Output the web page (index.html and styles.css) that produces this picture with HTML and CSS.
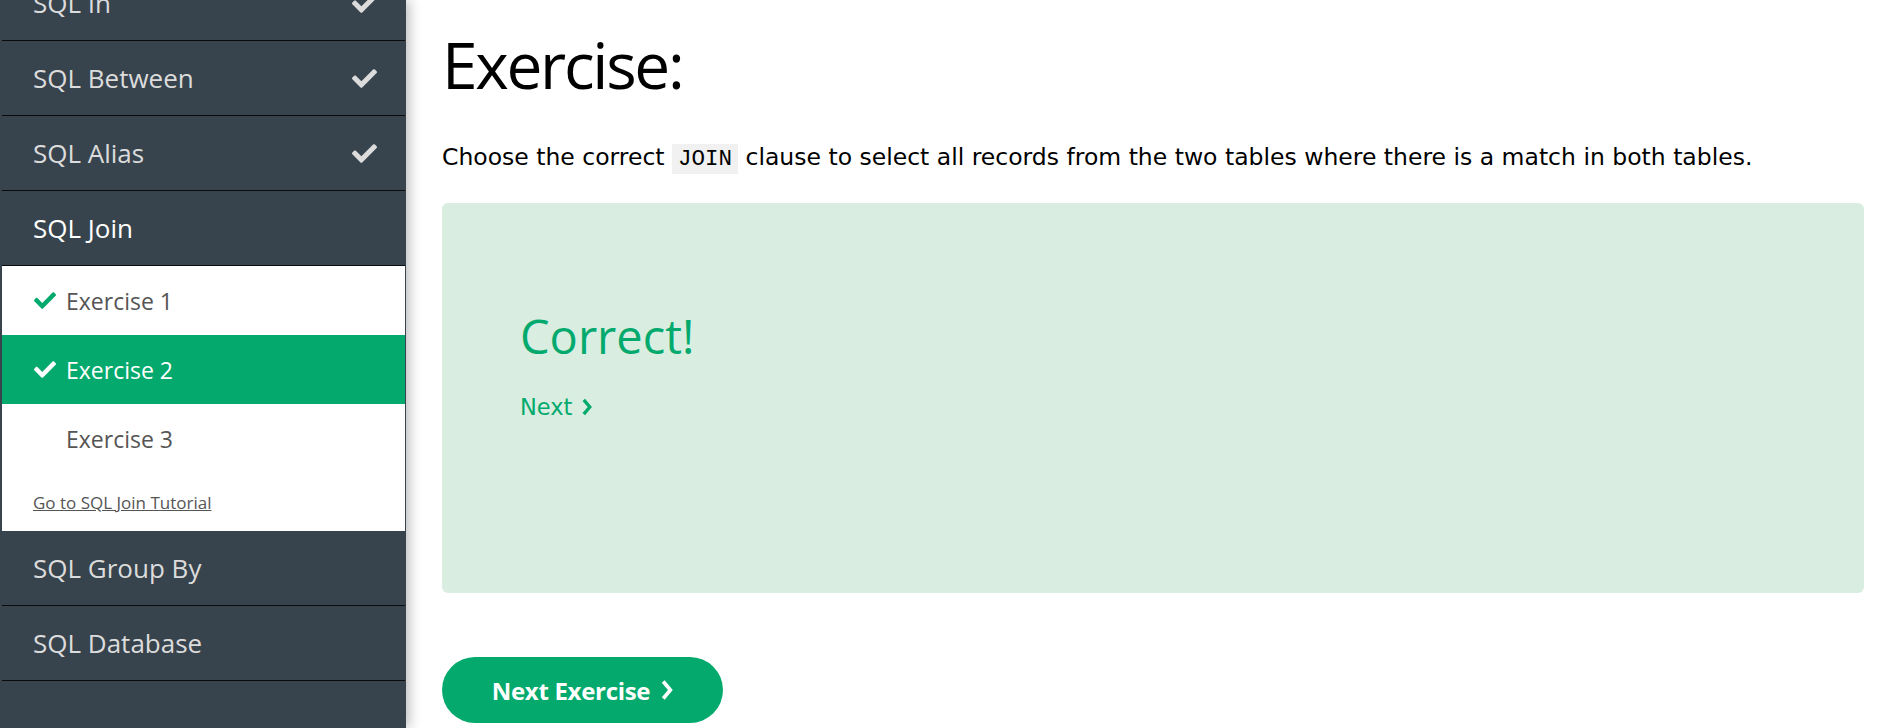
FILE: index.html
```html
<!DOCTYPE html>
<html lang="en">
<head>
<meta charset="utf-8">
<title>SQL Join Exercise</title>
<link rel="stylesheet" href="styles.css">
</head>
<body>
<nav class="sidebar">
  <ul class="menu">
    <li class="item done"><span>SQL In</span><svg class="tick" viewBox="0 65 512 382"><path d="M173.898 439.404l-166.4-166.4c-9.997-9.997-9.997-26.206 0-36.204l36.203-36.204c9.997-9.998 26.207-9.998 36.204 0L192 312.69 432.095 72.596c9.997-9.997 26.207-9.997 36.204 0l36.203 36.204c9.997 9.997 9.997 26.206 0 36.204l-294.4 294.401c-9.998 9.997-26.207 9.997-36.204-.001z"/></svg></li>
    <li class="item done"><span>SQL Between</span><svg class="tick" viewBox="0 65 512 382"><path d="M173.898 439.404l-166.4-166.4c-9.997-9.997-9.997-26.206 0-36.204l36.203-36.204c9.997-9.998 26.207-9.998 36.204 0L192 312.69 432.095 72.596c9.997-9.997 26.207-9.997 36.204 0l36.203 36.204c9.997 9.997 9.997 26.206 0 36.204l-294.4 294.401c-9.998 9.997-26.207 9.997-36.204-.001z"/></svg></li>
    <li class="item done"><span>SQL Alias</span><svg class="tick" viewBox="0 65 512 382"><path d="M173.898 439.404l-166.4-166.4c-9.997-9.997-9.997-26.206 0-36.204l36.203-36.204c9.997-9.998 26.207-9.998 36.204 0L192 312.69 432.095 72.596c9.997-9.997 26.207-9.997 36.204 0l36.203 36.204c9.997 9.997 9.997 26.206 0 36.204l-294.4 294.401c-9.998 9.997-26.207 9.997-36.204-.001z"/></svg></li>
    <li class="item active"><span>SQL Join</span></li>
    <li class="panel">
      <a class="ex done">
        <svg class="extick" viewBox="0 65 512 382"><path d="M173.898 439.404l-166.4-166.4c-9.997-9.997-9.997-26.206 0-36.204l36.203-36.204c9.997-9.998 26.207-9.998 36.204 0L192 312.69 432.095 72.596c9.997-9.997 26.207-9.997 36.204 0l36.203 36.204c9.997 9.997 9.997 26.206 0 36.204l-294.4 294.401c-9.998 9.997-26.207 9.997-36.204-.001z"/></svg>
        <span>Exercise 1</span>
      </a>
      <a class="ex done current">
        <svg class="extick" viewBox="0 65 512 382"><path d="M173.898 439.404l-166.4-166.4c-9.997-9.997-9.997-26.206 0-36.204l36.203-36.204c9.997-9.998 26.207-9.998 36.204 0L192 312.69 432.095 72.596c9.997-9.997 26.207-9.997 36.204 0l36.203 36.204c9.997 9.997 9.997 26.206 0 36.204l-294.4 294.401c-9.998 9.997-26.207 9.997-36.204-.001z"/></svg>
        <span>Exercise 2</span>
      </a>
      <a class="ex">
        <span class="extick blank"></span>
        <span>Exercise 3</span>
      </a>
      <div class="tutlink"><a>Go to SQL Join Tutorial</a></div>
    </li>
    <li class="item"><span>SQL Group By</span></li>
    <li class="item"><span>SQL Database</span></li>
  </ul>
</nav>
<main class="main">
  <h1 class="title">Exercise:</h1>
  <p class="question">Choose the correct <code>JOIN</code> clause to select all records from the two tables where there is a match in both tables.</p>
  <section class="result">
    <h2 class="correct">Correct!</h2>
    <a class="nextlink">Next <svg class="chev" viewBox="0 0 10 16"><path d="M2.5 1.5 L8 8 L2.5 14.5" fill="none" stroke="currentColor" stroke-width="3"/></svg></a>
  </section>
  <button class="nextbtn">Next Exercise <svg class="chev big" viewBox="0 0 10 16"><path d="M2.5 1.5 L8 8 L2.5 14.5" fill="none" stroke="currentColor" stroke-width="2.8"/></svg></button>
</main>
</body>
</html>
```

FILE: styles.css
```css
* { box-sizing: border-box; }
html, body { margin: 0; padding: 0; height: 100%; }
body {
  display: flex;
  background: #fff;
  overflow: hidden;
  font-family: "Open Sans", "Noto Sans", sans-serif;
}
.sidebar {
  width: 406px;
  flex: 0 0 406px;
  height: 728px;
  background: #38444d;
  box-shadow: 3px 0 12px rgba(0,0,0,0.28);
  overflow: hidden;
  position: relative;
  z-index: 1;
}
.menu {
  list-style: none;
  margin: -34px 1px 0 2px;
  padding: 0;
}
.item {
  height: 75px;
  border-bottom: 1px solid #0b0b0b;
  display: flex;
  align-items: center;
  justify-content: space-between;
  padding: 0 28px 0 31px;
  font-size: 26px;
  color: #dcdcdc;
}
.item.active { color: #fff; }
.tick {
  width: 25px;
  height: 19px;
  fill: #dcdcdc;
}
.panel {
  background: #fff;
  display: flex;
  flex-direction: column;
}
.ex {
  height: 69px;
  display: flex;
  align-items: center;
  gap: 10px;
  padding-left: 32px;
  font-size: 23px;
  color: #555;
}
.extick {
  width: 22px;
  height: 17px;
  fill: #04aa6d;
  flex: 0 0 22px;
}
.ex.current { background: #04aa6d; color: #fff; }
.ex.current .extick { fill: #fff; }
.tutlink {
  height: 58px;
  display: flex;
  align-items: center;
  padding-left: 31px;
}
.tutlink a {
  font-size: 17px;
  color: #555;
  text-decoration: underline;
}
.main {
  flex: 1;
  padding: 26px 15px 0 36px;
}
.title {
  margin: 0;
  font-weight: 400;
  font-size: 64px;
  line-height: 77px;
  letter-spacing: -2.3px;
  color: #000;
}
.question {
  margin: 37px 0 0;
  font-family: "DejaVu Sans", Verdana, sans-serif;
  font-size: 23.5px;
  line-height: 34px;
  color: #000;
}
.question code {
  font-family: "Liberation Mono", monospace;
  font-size: 22.5px;
  background: #f1f1f1;
  padding: 2px 6px;
}
.result {
  margin-top: 27px;
  height: 390px;
  background: #d9eee1;
  border-radius: 6px;
  padding: 101px 78px 0;
}
.correct {
  margin: 0;
  font-weight: 400;
  font-size: 47px;
  line-height: 64px;
  color: #04aa6d;
}
.nextlink {
  display: inline-flex;
  align-items: center;
  gap: 9px;
  margin-top: 22px;
  font-family: "DejaVu Sans", Verdana, sans-serif;
  font-size: 22.5px;
  line-height: 34px;
  color: #04aa6d;
}
.chev { width: 11px; height: 18px; }
.nextbtn {
  display: flex;
  align-items: center;
  justify-content: center;
  gap: 10px;
  margin-top: 64px;
  width: 281px;
  height: 66px;
  border: none;
  border-radius: 33px;
  background: #04aa6d;
  color: #fff;
  font-family: "Open Sans", sans-serif;
  font-weight: 700;
  font-size: 24px;
  letter-spacing: -0.3px;
  padding: 0;
}
.chev.big { width: 13px; height: 22px; }
```
